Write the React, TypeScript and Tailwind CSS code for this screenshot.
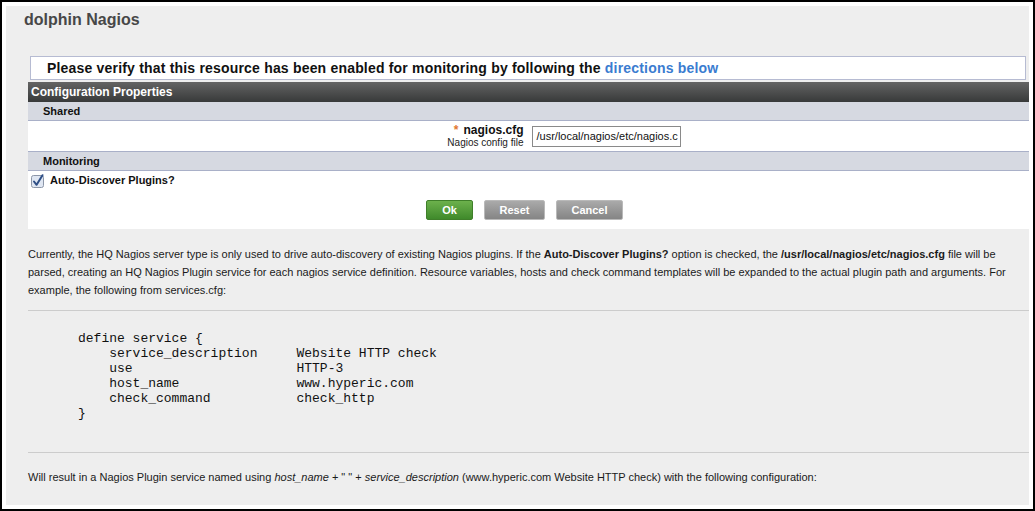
import React from 'react';

const sans = { fontFamily: '"Liberation Sans", Arial, sans-serif' };

function CheckMark() {
  return (
    <svg width="14" height="15" viewBox="0 0 14 15" className="block">
      <rect x="0.5" y="2.5" width="12" height="12" rx="2" fill="#dfe6f2" stroke="#8c96a8" />
      <path d="M3 8.5 L5.6 11.8 L11.5 2.2" fill="none" stroke="#2f4f86" strokeWidth="2" strokeLinecap="round" strokeLinejoin="round" />
    </svg>
  );
}

function SectionRow({ title, top }: { title: string; top?: boolean }) {
  return (
    <div
      className={`h-[19px] bg-[#d6d9e1] border-b border-[#a9b0c8] pl-[15px] text-[11px] font-bold leading-[18px] text-[#111] ${top ? 'border-t h-[20px]' : ''}`}
    >
      {title}
    </div>
  );
}

const code = `define service {
    service_description     Website HTTP check
    use                     HTTP-3
    host_name               www.hyperic.com
    check_command           check_http
}`;

export default function App() {
  return (
    <div className="w-[1035px] h-[511px] border-2 border-black bg-white p-1 flex" style={sans}>
      <div className="flex-1 bg-[#eeeeee] pl-[22px] flex flex-col">
        <h1 className="pt-[4px] -ml-[4px] text-[16px] leading-[20px] font-bold text-[#474747]">dolphin Nagios</h1>

        {/* verify notice */}
        <div className="mt-[26px] ml-[2px] mr-[3px] h-[24px] border border-[#b6bbd2] bg-white pl-[16px] text-[14px] font-bold leading-[22px] tracking-[0.19px] text-[#111]">
          Please verify that this resource has been enabled for monitoring by following the{' '}
          <span className="text-[#3a7cd0]">directions below</span>
        </div>

        {/* configuration form */}
        <div className="mt-[2px] bg-white">
          <div className="h-[20px] bg-linear-to-b from-[#646464] to-[#383a3a] pl-[3px] text-[12px] font-bold leading-[20px] text-white">
            Configuration Properties
          </div>
          <SectionRow title="Shared" />
          <div className="h-[30px] grid grid-cols-2 items-center">
            <div className="flex flex-col items-end pr-[5px] text-right">
              <div className="text-[12px] font-bold leading-[13px] text-[#111]">
                <span className="text-[#e2782f] mr-[5px]">*</span>nagios.cfg
              </div>
              <div className="text-[10px] leading-[12px] text-[#222]">Nagios config file</div>
            </div>
            <div className="pl-[3px]">
              <div className="w-[149px] h-[21px] border border-[#8a8a8a] bg-white pl-[4px] text-[11px] leading-[19px] text-[#111] whitespace-nowrap">
                /usr/local/nagios/etc/nagios.c
              </div>
            </div>
          </div>
          <SectionRow title="Monitoring" top />
          <div className="h-[19px] flex items-center pl-[3px] gap-[5px]">
            <CheckMark />
            <span className="text-[11px] font-bold text-[#111]">Auto-Discover Plugins?</span>
          </div>
          <div className="mt-[10px] pb-[9px] flex justify-center gap-[11px] pr-[8px]">
            <button className="w-[47px] h-[20px] rounded-[2px] border border-[#3f7f2a] bg-linear-to-b from-[#6cb14c] to-[#3f8a2b] text-[11px] font-bold text-white">
              Ok
            </button>
            <button className="w-[61px] h-[20px] rounded-[2px] border border-[#b9b9b9] bg-linear-to-b from-[#aaaaaa] to-[#858585] text-[11px] font-bold text-white">
              Reset
            </button>
            <button className="w-[67px] h-[20px] rounded-[2px] border border-[#b9b9b9] bg-linear-to-b from-[#aaaaaa] to-[#858585] text-[11px] font-bold text-white">
              Cancel
            </button>
          </div>
        </div>

        <p className="mt-[16px] pr-[18px] text-[11px] leading-[18px] text-[#1a1a1a]">
          Currently, the HQ Nagios server type is only used to drive auto-discovery of existing Nagios plugins. If the{' '}
          <b>Auto-Discover Plugins?</b> option is checked, the <b>/usr/local/nagios/etc/nagios.cfg</b> file will be
          parsed, creating an HQ Nagios Plugin service for each nagios service definition. Resource variables, hosts and
          check command templates will be expanded to the actual plugin path and arguments. For example, the following
          from services.cfg:
        </p>

        <div className="mt-[11px] border-t border-[#cccccc]" />
        <pre
          className="mt-[20px] pl-[50px] text-[13px] leading-[15px] text-[#111]"
          style={{ fontFamily: '"Liberation Mono", "Courier New", monospace' }}
        >
          {code}
        </pre>
        <div className="mt-[31px] border-t border-[#cccccc]" />

        <p className="mt-[15px] text-[11px] leading-[18px] text-[#1a1a1a]">
          Will result in a Nagios Plugin service named using <i>host_name</i> + " " + <i>service_description</i>{' '}
          (www.hyperic.com Website HTTP check) with the following configuration:
        </p>
      </div>
    </div>
  );
}
